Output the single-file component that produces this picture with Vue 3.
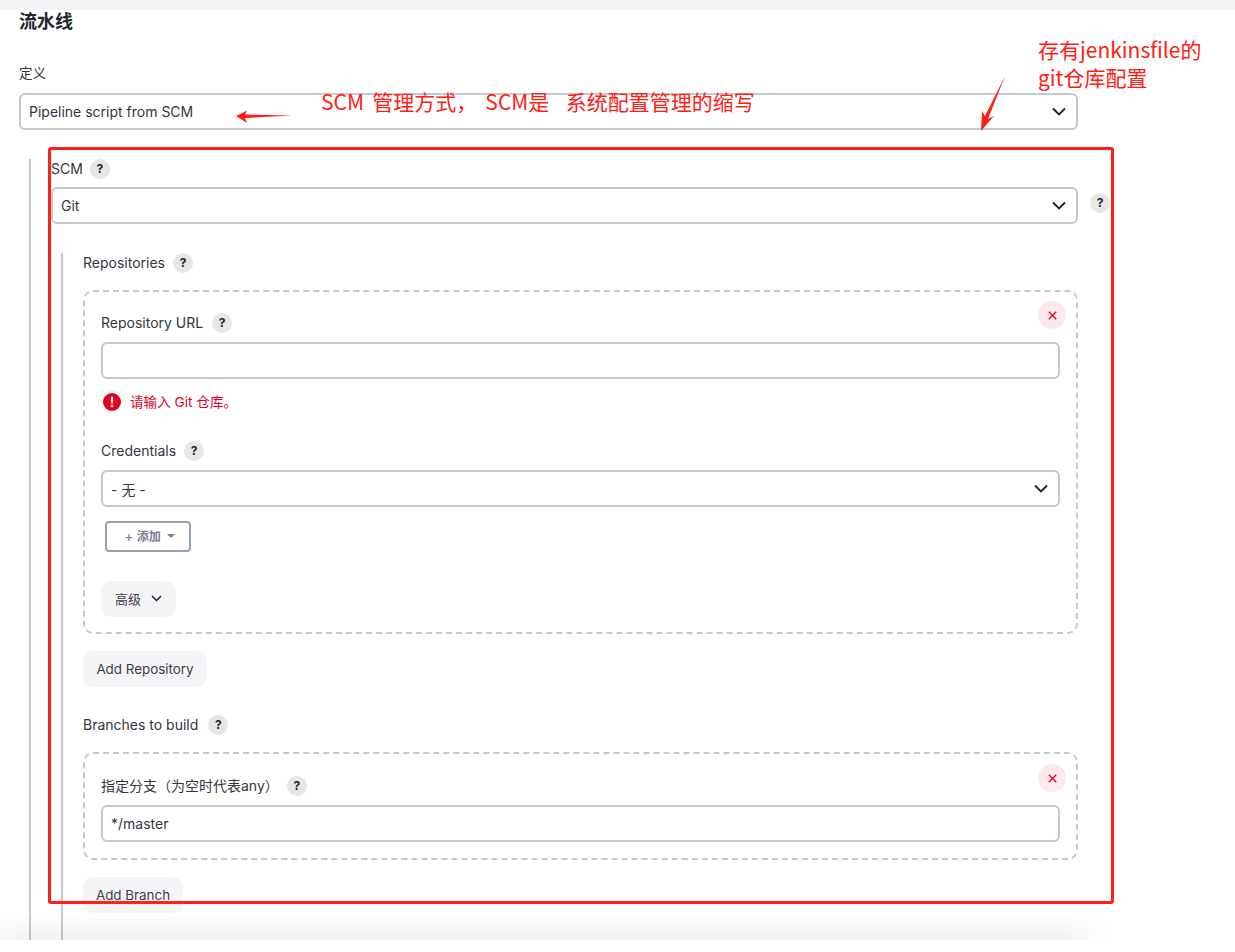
<script setup>
const chevron = 'M1 1.5 L7 7.5 L13 1.5'
</script>

<template>
  <div class="screen">
    <div class="topbar"></div>
    <main class="page">
      <h2 class="title">流水线</h2>
      <label class="lbl def">定义</label>
      <div class="field sel top-sel">
        <span>Pipeline script from SCM</span>
        <svg class="chev" width="14" height="9" viewBox="0 0 14 9"><path :d="chevron" /></svg>
      </div>

      <div class="guide outer">
        <div class="row scm-lab"><span class="lbl-m">SCM</span><span class="help">?</span></div>
        <div class="with-help">
          <div class="field sel grow">
            <span>Git</span>
            <svg class="chev" width="14" height="9" viewBox="0 0 14 9"><path :d="chevron" /></svg>
          </div>
          <span class="help side">?</span>
        </div>

        <div class="guide inner">
          <div class="row repos-lab"><span class="lbl-m">Repositories</span><span class="help">?</span></div>

          <section class="dash repo">
            <button class="close" aria-label="close"><svg width="9" height="9" viewBox="0 0 9 9"><path d="M.8.8l7.400 7.400M8.200.8L.8 8.200" /></svg></button>
            <div class="row url-lab"><span class="lbl-m">Repository URL</span><span class="help">?</span></div>
            <div class="field"></div>
            <div class="err">
              <svg width="18" height="18" viewBox="0 0 18 18"><circle cx="9" cy="9" r="9" fill="#e6001f" /><rect x="7.900" y="3.600" width="2.200" height="7" rx="1" fill="#fff" /><circle cx="9" cy="13" r="1.300" fill="#fff" /></svg>
              <span class="err-text">请输入 Git 仓库。</span>
            </div>
            <div class="row cred-lab"><span class="lbl-m">Credentials</span><span class="help">?</span></div>
            <div class="field sel">
              <span>- 无 -</span>
              <svg class="chev" width="14" height="9" viewBox="0 0 14 9"><path :d="chevron" /></svg>
            </div>
            <button class="add-btn"><span class="plus">+</span> 添加<i class="caret"></i></button>
            <button class="soft adv">高级<svg width="11" height="7" viewBox="0 0 11 7"><path d="M1 1l4.500 4.500L10 1" /></svg></button>
          </section>

          <button class="soft add-repo">Add Repository</button>
          <div class="row branch-lab"><span class="lbl-m">Branches to build</span><span class="help">?</span></div>

          <section class="dash branch">
            <button class="close" aria-label="close"><svg width="9" height="9" viewBox="0 0 9 9"><path d="M.8.8l7.400 7.400M8.200.8L.8 8.200" /></svg></button>
            <div class="row spec-lab"><span class="lbl-s">指定分支（为空时代表any）</span><span class="help">?</span></div>
            <div class="field"><span>*/master</span></div>
          </section>

          <button class="soft add-branch">Add Branch</button>
        </div>
      </div>
    </main>

    <div class="shade"></div>

    <div class="red-box"></div>
    <svg class="arrows" width="1235" height="952" viewBox="0 0 1235 952">
      <path d="M236 116 L247 110.500 L245 114.500 L292 115.500 L245 118 L247 123 Z" fill="#ff2015" />
      <path d="M1005 76 L988 119 L994 116 L981 131 L982 111 L985 116 Z" fill="#ff2015" />
    </svg>
    <div class="note n1">SCM 管理方式， SCM是&nbsp; 系统配置管理的缩写</div>
    <div class="note n2">存有jenkinsfile的<br />git仓库配置</div>
  </div>
</template>

<style>
html, body { margin: 0; background: #fff; }
</style>

<style scoped>
.screen {
  position: relative;
  width: 1235px;
  height: 952px;
  overflow: hidden;
  background: #fff;
  color: #1f2230;
  font-family: Inter, "Noto Sans CJK SC", "Noto Sans", sans-serif;
  font-size: 14px;
}
.topbar { height: 10px; background: #f5f5f7; }
.page {
  width: 1100px;
  height: 930px;
  margin-left: 19px;
  overflow: hidden;
}
.title {
  margin: 2px 0 0;
  font-size: 18px;
  line-height: 20px;
  font-weight: 700;
  color: #23252f;
}
.lbl { display: block; font-size: 13.500px; line-height: 16px; }
.def { margin-top: 33px; color: #333642; }
.field {
  box-sizing: border-box;
  height: 37px;
  display: flex;
  align-items: center;
  justify-content: space-between;
  padding: 0 8px;
  border: 2px solid #c0cbd0;
  border-radius: 6px;
  background: #fff;
  color: #33363f;
}
.top-sel { margin-top: 12px; width: 1059px; }
.chev { margin-right: 2px; flex: none; }
.chev path { fill: none; stroke: #1f2230; stroke-width: 1.900; }
.adv path { fill: none; stroke: #1f2230; stroke-width: 1.500; }
.guide { box-sizing: border-box; border-left: 2px solid #c0cbd0; }
.outer { margin: 29px 0 0 10px; padding-left: 20px; height: 800px; }
.inner { margin: 29px 0 0 10px; padding-left: 20px; height: 700px; }
.row { display: flex; align-items: center; height: 20px; }
.lbl-m { color: #33363f; line-height: 20px; }
.lbl-s { color: #33363f; font-size: 14px; line-height: 20px; }
.help {
  flex: none;
  width: 20px;
  height: 20px;
  margin-left: 8px;
  border-radius: 50%;
  background: #e6e6e6;
  color: #23252f;
  font-size: 12px;
  font-weight: 700;
  line-height: 20px;
  text-align: center;
}
.scm-lab .help { margin-left: 7px; }
.url-lab .help { margin-left: 9px; }
.branch-lab .help { margin-left: 10px; }
.with-help { margin-top: 8px; display: flex; }
.grow { flex: none; width: 1027px; }
.help.side { margin: 6px 0 0 12px; }
.dash {
  position: relative;
  box-sizing: border-box;
  width: 995px;
  padding: 0 16px;
  border: 2px dashed #c0cbd0;
  border-radius: 10px;
}
.repo { margin-top: 17px; height: 344px; padding-top: 21px; }
.url-lab { margin-bottom: 9px; }
.err {
  display: flex;
  align-items: center;
  gap: 9px;
  margin: 14px 0 0 2px;
  height: 18px;
  color: #e6001f;
  font-size: 13.600px;
}
.err-text { padding-bottom: 2px; }
.cred-lab { margin-top: 30px; margin-bottom: 9px; }
.add-btn {
  display: flex;
  align-items: center;
  justify-content: center;
  box-sizing: border-box;
  width: 86px;
  height: 31px;
  margin: 14px 0 0 4px;
  padding: 0 0 2px 3px;
  border: 2px solid #95a3ae;
  border-radius: 4px;
  background: #fff;
  color: #7a7d93;
  font: 700 12px Inter, "Noto Sans CJK SC", sans-serif;
}
.plus { font-weight: 400; font-size: 14px; margin-right: 3px; }
.caret {
  width: 0;
  height: 0;
  margin-left: 6px;
  border: 4px solid transparent;
  border-top-color: #7a7d93;
  border-bottom-width: 0;
}
.soft {
  display: flex;
  align-items: center;
  justify-content: center;
  box-sizing: border-box;
  height: 36px;
  padding: 0;
  border: 0;
  border-radius: 10px;
  background: #f5f5f7;
  color: #3a3d48;
  font: 400 13px Inter, "Noto Sans CJK SC", sans-serif;
}
.adv { width: 75px; margin-top: 29px; gap: 10px; padding-bottom: 2px; }
.add-repo { width: 124px; margin-top: 17px; font-size: 13.400px; }
.branch-lab { margin-top: 28px; }
.branch { margin-top: 17px; height: 108px; padding-top: 22px; }
.spec-lab { margin-bottom: 9px; }
.add-branch { width: 100px; margin-top: 17px; font-size: 13.400px; }
.close {
  position: absolute;
  top: 9px;
  right: 10px;
  width: 28px;
  height: 28px;
  display: flex;
  align-items: center;
  justify-content: center;
  padding: 0;
  border: 0;
  border-radius: 50%;
  background: #fbe9ec;
}
.branch .close { top: 10px; }
.close path { fill: none; stroke: #e6001f; stroke-width: 1.300; }
.shade {
  position: absolute;
  left: -20px;
  top: 912px;
  width: 1130px;
  height: 28px;
  background: linear-gradient(to bottom, rgba(0,0,0,0), rgba(0,0,0,.055));
  -webkit-mask-image: linear-gradient(to right, transparent 0, #000 50px, #000 1080px, transparent 100%);
  mask-image: linear-gradient(to right, transparent 0, #000 50px, #000 1080px, transparent 100%);
}
.red-box {
  position: absolute;
  left: 48px;
  top: 147px;
  box-sizing: border-box;
  width: 1066px;
  height: 757px;
  border: 3px solid #ff2015;
  border-radius: 3px;
}
.arrows { position: absolute; left: 0; top: 0; }
.note {
  position: absolute;
  color: #ff2015;
  font-family: "Noto Sans CJK SC", "Noto Sans", sans-serif;
  font-size: 21px;
  line-height: 28px;
  white-space: nowrap;
}
.n1 { left: 321px; top: 87px; word-spacing: 3.500px; }
.n2 { left: 1038px; top: 35px; }
</style>
